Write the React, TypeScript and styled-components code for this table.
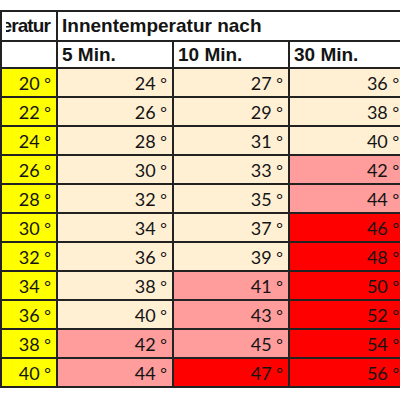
import React from 'react';
import styled, { createGlobalStyle } from 'styled-components';

type Tone = 'yellow' | 'cream' | 'pink' | 'red';

const toneColors: Record<Tone, string> = {
  yellow: '#FFFF00',
  cream: '#FFF0D4',
  pink: '#FF9C9C',
  red: '#FF0000',
};

// Außentemperatur, dann 5 / 10 / 30 Min.
const rows: number[][] = [
  [20, 24, 27, 36],
  [22, 26, 29, 38],
  [24, 28, 31, 40],
  [26, 30, 33, 42],
  [28, 32, 35, 44],
  [30, 34, 37, 46],
  [32, 36, 39, 48],
  [34, 38, 41, 50],
  [36, 40, 43, 52],
  [38, 42, 45, 54],
  [40, 44, 47, 56],
];

const toneFor = (col: number, value: number): Tone => {
  if (col === 0) return 'yellow';
  if (value >= 46) return 'red';
  if (value >= 41) return 'pink';
  return 'cream';
};

const GlobalStyle = createGlobalStyle`
  html, body {
    margin: 0;
    padding: 0;
    background: #ffffff;
    overflow: hidden;
  }
`;

const Page = styled.div`
  width: 400px;
  height: 400px;
  overflow: hidden;
  padding-top: 10px;
  box-sizing: border-box;
  font-family: Lato, "Open Sans", "Liberation Sans", sans-serif;
  color: #141414;
`;

const Table = styled.table`
  border-collapse: collapse;
  table-layout: fixed;
  width: 404px;
`;

const Col = styled.col<{ $w: number }>`
  width: ${p => p.$w}px;
`;

const HeadCell = styled.th<{ $h: number }>`
  height: ${p => p.$h}px;
  padding: 0 4px;
  border: 2px solid #222;
  background: #ffffff;
  font-family: "Liberation Sans", Arial, sans-serif;
  font-size: 19px;
  font-weight: 700;
  text-align: left;
  white-space: nowrap;
  overflow: hidden;
  box-sizing: border-box;
`;

// Spaltenkopf ist breiter als die Spalte: links abschneiden
const ClipRight = styled.div`
  display: flex;
  justify-content: flex-end;
  overflow: hidden;
  white-space: nowrap;
  padding-right: 2px;
  letter-spacing: -0.9px;
`;

const Cell = styled.td<{ $tone: Tone }>`
  height: 29px;
  padding: 0 5px 0 4px;
  border: 2px solid #222;
  background: ${p => toneColors[p.$tone]};
  font-size: 18px;
  text-align: right;
  white-space: nowrap;
  box-sizing: border-box;
`;

const Degree = styled.span`
  font-size: 16px;
  vertical-align: 1px;
`;

const App = () => {
  return (
    <Page>
      <GlobalStyle />
      <Table>
        <colgroup>
          <Col $w={56} />
          <Col $w={116} />
          <Col $w={116} />
          <Col $w={116} />
        </colgroup>
        <thead>
          <tr>
            <HeadCell $h={30}>
              <ClipRight>Außentemperatur</ClipRight>
            </HeadCell>
            <HeadCell $h={30} colSpan={3}>Innentemperatur nach</HeadCell>
          </tr>
          <tr>
            <HeadCell $h={27}></HeadCell>
            <HeadCell $h={27}>5 Min.</HeadCell>
            <HeadCell $h={27}>10 Min.</HeadCell>
            <HeadCell $h={27}>30 Min.</HeadCell>
          </tr>
        </thead>
        <tbody>
          {rows.map((row, r) => (
            <tr key={r}>
              {row.map((v, c) => (
                <Cell key={c} $tone={toneFor(c, v)}>
                  {v} <Degree>°</Degree>
                </Cell>
              ))}
            </tr>
          ))}
        </tbody>
      </Table>
    </Page>
  );
};

export default App;
